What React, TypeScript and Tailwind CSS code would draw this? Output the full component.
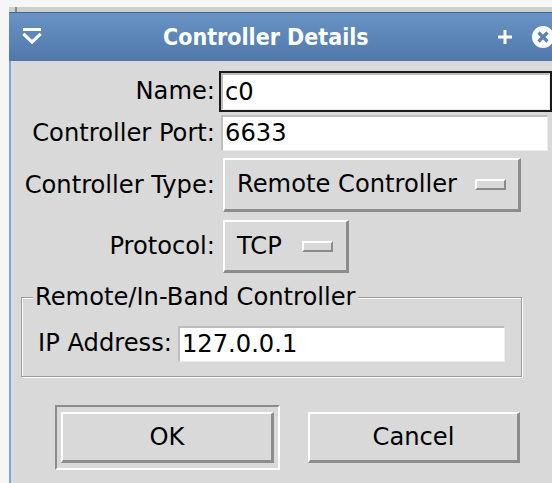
import React from "react";

const ui = { fontFamily: '"DejaVu Sans", "Liberation Sans", sans-serif' };

function Entry({ value, focused, width, height }: { value: string; focused?: boolean; width: number; height: number }) {
  return (
    <div
      className={focused ? "border-2 border-[#1a1a1a]" : "border-2 border-[#d9d9d9]"}
      style={{ width, height }}
    >
      <div className="h-full w-full bg-white border-t-2 border-l-2 border-[#bdbdbd] border-b border-r border-b-[#ececec] border-r-[#ececec] flex items-center pl-[2px] text-black">
        {value}
      </div>
    </div>
  );
}

function Indicator() {
  return (
    <span className="inline-block w-[31px] h-[11px] bg-[#d9d9d9] border-t-2 border-l-2 border-white border-b-2 border-r-2 border-b-[#8a8a8a] border-r-[#8a8a8a]" />
  );
}

function OptionMenu({ label, width, height, gap }: { label: string; width: number; height: number; gap: number }) {
  return (
    <div
      className="flex items-center bg-[#d9d9d9] border-t-2 border-l-2 border-white border-b-[3px] border-r-[3px] border-b-[#8c8c8c] border-r-[#8c8c8c] pl-[12px] text-black"
      style={{ width, height }}
    >
      <span>{label}</span>
      <span style={{ marginLeft: gap }} className="flex items-center">
        <Indicator />
      </span>
    </div>
  );
}

function PushButton({ label, width }: { label: string; width: number }) {
  return (
    <div
      className="flex items-center justify-center bg-[#d9d9d9] border-t-2 border-l-2 border-white border-b-[3px] border-r-[3px] border-b-[#8c8c8c] border-r-[#8c8c8c] text-black h-[51px]"
      style={{ width }}
    >
      {label}
    </div>
  );
}

export default function App() {
  return (
    <div className="w-[552px] h-[483px] bg-[#f6f6f6] overflow-hidden" style={ui}>
      <div className="ml-[9px] pt-[7px] flex flex-col h-[483px]">
        {/* strip of the window behind */}
        <div className="h-[5px] bg-[#cfcfcf] flex">
          <div className="ml-[6px] w-[2px] h-full bg-[#8a8a8a]" />
        </div>

        {/* title bar */}
        <div className="h-[49px] border-t border-[#3f6797] bg-gradient-to-b from-[#6893c5] to-[#5079aa] flex items-center text-white">
          <svg width="20" height="18" viewBox="0 0 20 18" className="ml-[13px]">
            <rect x="1" y="0" width="18" height="3" fill="#fff" />
            <path d="M2.5 7 L10 14 L17.5 7" stroke="#fff" strokeWidth="3.2" fill="none" strokeLinecap="square" />
          </svg>
          <span
            className="ml-[121px] font-bold text-[23px] leading-none"
            style={{ fontFamily: '"DejaVu Sans Condensed", "DejaVu Sans", sans-serif' }}
          >
            Controller Details
          </span>
          <svg width="16" height="16" viewBox="0 0 16 16" className="ml-auto mr-[18px]">
            <path d="M8 1 V15 M1 8 H15" stroke="#fff" strokeWidth="3" />
          </svg>
          <svg width="24" height="24" viewBox="0 0 24 24" className="mr-[-3px]">
            <circle cx="12" cy="12" r="11" fill="#fff" />
            <path d="M7.5 7.5 L16.5 16.5 M16.5 7.5 L7.5 16.5" stroke="#5a84b6" strokeWidth="3.2" />
          </svg>
        </div>

        {/* dialog body */}
        <div className="flex-1 bg-[#d9d9d9] border-l-2 border-[#7aa6dc] text-[24.2px] leading-none">
          <div className="grid grid-cols-[204px_1fr] items-center pt-[10px]">
            <div className="text-right text-black">Name:</div>
            <div className="ml-[4px]">
              <Entry value="c0" focused width={333} height={41} />
            </div>

            <div className="text-right text-black mt-[1px]">Controller Port:</div>
            <div className="ml-[4px] mt-[1px]">
              <Entry value="6633" width={331} height={40} />
            </div>

            <div className="text-right text-black mt-[5px]">Controller Type:</div>
            <div className="ml-[8px] mt-[5px]">
              <OptionMenu label="Remote Controller" width={298} height={54} gap={18} />
            </div>

            <div className="text-right text-black mt-[8px]">Protocol:</div>
            <div className="ml-[8px] mt-[8px]">
              <OptionMenu label="TCP" width={126} height={53} gap={20} />
            </div>
          </div>

          {/* labelled frame */}
          <div className="relative ml-[10px] mt-[24px] w-[501px] h-[80px] border border-[#9c9c9c] shadow-[inset_1px_1px_0_#ffffff,1px_1px_0_#ffffff] flex items-center pl-[16px] pt-[13px]">
            <div className="absolute left-[11px] top-[-13px] bg-[#d9d9d9] px-[2px] text-black">
              Remote/In-Band Controller
            </div>
            <span className="text-black">IP Address:</span>
            <div className="ml-[4px]">
              <Entry value="127.0.0.1" width={331} height={40} />
            </div>
          </div>

          {/* action buttons */}
          <div className="flex items-center mt-[28px]">
            <div className="ml-[44px] w-[225px] h-[65px] border-t-2 border-l-2 border-[#8c8c8c] border-b-2 border-r-2 border-b-white border-r-white flex items-center justify-center">
              <PushButton label="OK" width={213} />
            </div>
            <div className="ml-[28px]">
              <PushButton label="Cancel" width={212} />
            </div>
          </div>
        </div>
      </div>
    </div>
  );
}
